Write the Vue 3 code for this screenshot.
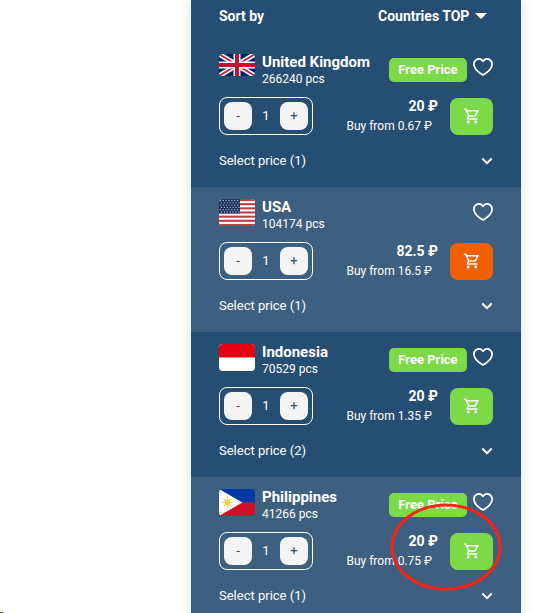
<template>
  <main class="page">
    <section class="panel">
      <div class="sort">
        <label for="sort">Sort by</label>
        <div class="sort-select">
          <select id="sort" v-model="sortBy">
            <option>Countries TOP</option>
          </select>
          <svg class="caret" viewBox="0 0 12 6" aria-hidden="true"><path d="M0 0h12L6 6z" fill="#fff" /></svg>
        </div>
      </div>

      <article v-for="item in countries" :key="item.code" class="item">
        <div class="item-head">
          <svg v-if="item.code === 'gb'" class="flag flag-gb" viewBox="0 0 36 22">
            <rect width="36" height="22" fill="#012169" />
            <path d="M0 0L36 22M36 0L0 22" stroke="#fff" stroke-width="5" />
            <path d="M0 0L36 22M36 0L0 22" stroke="#c8102e" stroke-width="1.6" />
            <path d="M18 0v22M0 11h36" stroke="#fff" stroke-width="7" />
            <path d="M18 0v22M0 11h36" stroke="#c8102e" stroke-width="4" />
          </svg>
          <svg v-else-if="item.code === 'us'" class="flag" viewBox="0 0 36 27">
            <rect width="36" height="27" fill="#fff" />
            <rect v-for="n in 7" :key="n" :y="(n - 1) * 4.154" width="36" height="2.077" fill="#bd3d44" />
            <rect width="21" height="14.5" fill="#192f5d" />
            <template v-for="row in 6" :key="row">
              <circle v-for="col in 7" :key="col" :cx="col * 2.9 - (row % 2 ? 1.6 : 0.4)" :cy="row * 2.3 - 0.8" r="0.65" fill="#c5cbd8" />
            </template>
          </svg>
          <svg v-else-if="item.code === 'id'" class="flag" viewBox="0 0 36 27">
            <rect width="36" height="27" fill="#fff" />
            <rect width="36" height="13.5" fill="#e70011" />
          </svg>
          <svg v-else class="flag" viewBox="0 0 36 27">
            <rect width="36" height="13.5" fill="#0038a8" />
            <rect y="13.5" width="36" height="13.5" fill="#ce1126" />
            <path d="M0 0L23.4 13.5L0 27z" fill="#fff" />
            <path d="M8.5 8v11M3 13.5h11M4.6 9.6l7.8 7.8M12.4 9.6l-7.8 7.8" stroke="#f0d34b" stroke-width="1.2" />
            <circle cx="8.5" cy="13.5" r="2.8" fill="#f0d34b" />
            <circle cx="1.7" cy="3.4" r="1.1" fill="#f0d34b" />
            <circle cx="1.7" cy="23.6" r="1.1" fill="#f0d34b" />
            <circle cx="20" cy="13.5" r="1.1" fill="#f0d34b" />
          </svg>

          <div class="title">
            <h2>{{ item.name }}</h2>
            <p>{{ item.count }} pcs</p>
          </div>
          <span v-if="item.free" class="badge">Free Price</span>
          <button class="like" type="button" :aria-label="'Add ' + item.name + ' to favourites'">
            <svg viewBox="0 0 20 18" fill="none" stroke="#fff" stroke-width="1.7" stroke-linejoin="round">
              <path d="M10 3.3C8.2.8 5.5.5 3.6 1.6 1.3 3 .5 5.700 1.300 8.300 2.300 11.700 5.800 14.700 10 17c4.200-2.300 7.700-5.300 8.700-8.700.8-2.600 0-5.300-2.300-6.700C14.500.5 11.800.8 10 3.300z" />
            </svg>
          </button>
        </div>

        <div class="item-buy">
          <div class="stepper">
            <button type="button" aria-label="Less" @click="item.qty = Math.max(1, item.qty - 1)">-</button>
            <input v-model.number="item.qty" type="text" aria-label="Quantity" />
            <button type="button" aria-label="More" @click="item.qty++">+</button>
          </div>
          <div class="price">
            <strong>{{ item.price }} ₽</strong>
            <span>Buy from {{ item.from }} ₽</span>
          </div>
          <button class="cart" :class="{ 'cart-orange': !item.free }" type="button" aria-label="Add to cart">
            <svg viewBox="0 0 24 24" fill="#fff">
              <path d="M15.550 13c.75 0 1.410-.41 1.750-1.030l3.580-6.490A.996.996 0 0 0 20.010 4H5.210l-.94-2H1v2h2l3.600 7.590-1.350 2.440C4.520 15.370 5.480 17 7 17h12v-2H7l1.100-2h7.450zM6.160 6h12.150l-2.760 5H8.530L6.160 6zM7 18c-1.100 0-1.990.9-1.990 2S5.900 22 7 22s2-.9 2-2-.9-2-2-2zm10 0c-1.100 0-1.990.9-1.990 2s.89 2 1.990 2 2-.9 2-2-.9-2-2-2z" />
            </svg>
          </button>
        </div>

        <button class="select-price" type="button">
          <span>Select price ({{ item.options }})</span>
          <svg viewBox="0 0 12 8" fill="none" stroke="#fff" stroke-width="2"><path d="M1.300 1.500L6 6.200l4.700-4.700" /></svg>
        </button>

        <svg v-if="item.code === 'ph'" class="mark" viewBox="0 0 112 88" fill="none" aria-hidden="true">
          <ellipse cx="56" cy="44" rx="54" ry="42" stroke="#fb2116" stroke-width="3" />
        </svg>
      </article>
    </section>
    <i class="pixels"></i>
  </main>
</template>

<script setup>
import { ref } from 'vue'

const sortBy = ref('Countries TOP')

const countries = ref([
  { code: 'gb', name: 'United Kingdom', count: 266240, free: true, price: '20', from: '0.67', options: 1, qty: 1 },
  { code: 'us', name: 'USA', count: 104174, free: false, price: '82.5', from: '16.5', options: 1, qty: 1 },
  { code: 'id', name: 'Indonesia', count: 70529, free: true, price: '20', from: '1.35', options: 2, qty: 1 },
  { code: 'ph', name: 'Philippines', count: 41266, free: true, price: '20', from: '0.75', options: 1, qty: 1 }
])
</script>

<style>
html {
  scrollbar-width: none;
}

body {
  margin: 0;
  background: #fff;
}
</style>

<style scoped>
.page {
  padding: 0 33px 0 191px;
  font-family: Roboto, "Liberation Sans", sans-serif;
  font-size: 13px;
  line-height: 16px;
  color: #fff;
}

.page * {
  box-sizing: border-box;
}

button,
input,
select {
  margin: 0;
  padding: 0;
  border: none;
  background: none;
  font: inherit;
  color: inherit;
}

button {
  cursor: pointer;
}

.panel {
  background: #264e72;
  box-shadow: 0 0 12px rgba(0, 0, 0, 0.12);
}

.sort {
  display: flex;
  justify-content: space-between;
  align-items: center;
  padding: 6px 34px 16px 28px;
  font-size: 14px;
  line-height: 20px;
  font-weight: 700;
}

.sort-select {
  display: flex;
  align-items: center;
  gap: 5px;
}

.sort-select select {
  appearance: none;
  height: 20px;
}

.sort-select option {
  color: #264e72;
}

.caret {
  width: 12px;
  height: 6px;
}

.item {
  position: relative;
  padding: 12px 28px 14px;
}

.item:nth-of-type(even) {
  background: #3d6080;
}

.item-head {
  display: flex;
  align-items: flex-start;
  height: 42px;
}

.flag {
  width: 36px;
  height: 27px;
  border-radius: 4px;
  flex: none;
}

.flag-gb {
  height: 22px;
}

.title {
  flex: 1;
  margin-left: 7px;
  white-space: nowrap;
}

.title h2 {
  margin: 0;
  font-size: 15px;
  line-height: 17px;
  font-weight: 700;
}

.title p {
  margin: 0;
  font-size: 12px;
}

.badge {
  width: 78px;
  margin-top: 4px;
  border-radius: 5px;
  background: #7cd947;
  line-height: 24px;
  font-weight: 700;
  text-align: center;
}

.like {
  margin: 4px 0 0 6px;
}

.like svg {
  display: block;
  width: 20px;
  height: 18px;
}

.item-buy {
  display: flex;
  align-items: center;
}

.stepper {
  display: flex;
  align-items: center;
  width: 94px;
  height: 38px;
  padding: 0 4px;
  border: 1px solid #fff;
  border-radius: 8px;
}

.stepper button {
  flex: none;
  width: 28px;
  height: 28px;
  border-radius: 8px;
  background: #f4f4f4;
  color: #264e72;
}

.stepper input {
  flex: 1;
  min-width: 0;
  text-align: center;
}

.price {
  flex: 1;
  display: flex;
  flex-direction: column;
  align-items: flex-end;
  padding-right: 12px;
  line-height: 20px;
}

.price strong {
  font-size: 14px;
}

.price span {
  padding-right: 6px;
  font-size: 12px;
}

.cart {
  display: flex;
  justify-content: center;
  align-items: center;
  width: 43px;
  height: 37px;
  border-radius: 8px;
  background: #7cd947;
}

.cart-orange {
  background: #f06000;
}

.cart svg {
  width: 18px;
  height: 18px;
}

.select-price {
  display: flex;
  justify-content: space-between;
  align-items: center;
  width: 100%;
  height: 24px;
  margin-top: 13px;
}

.select-price svg {
  width: 12px;
  height: 8px;
}

.mark {
  position: absolute;
  top: 26px;
  right: 19px;
  width: 112px;
  height: 88px;
  pointer-events: none;
}

.pixels {
  position: fixed;
  left: 0;
  bottom: 0;
  width: 3px;
  height: 1px;
  background: linear-gradient(90deg, #f22 33%, #2b4 33% 66%, #24f 66%);
}
</style>
